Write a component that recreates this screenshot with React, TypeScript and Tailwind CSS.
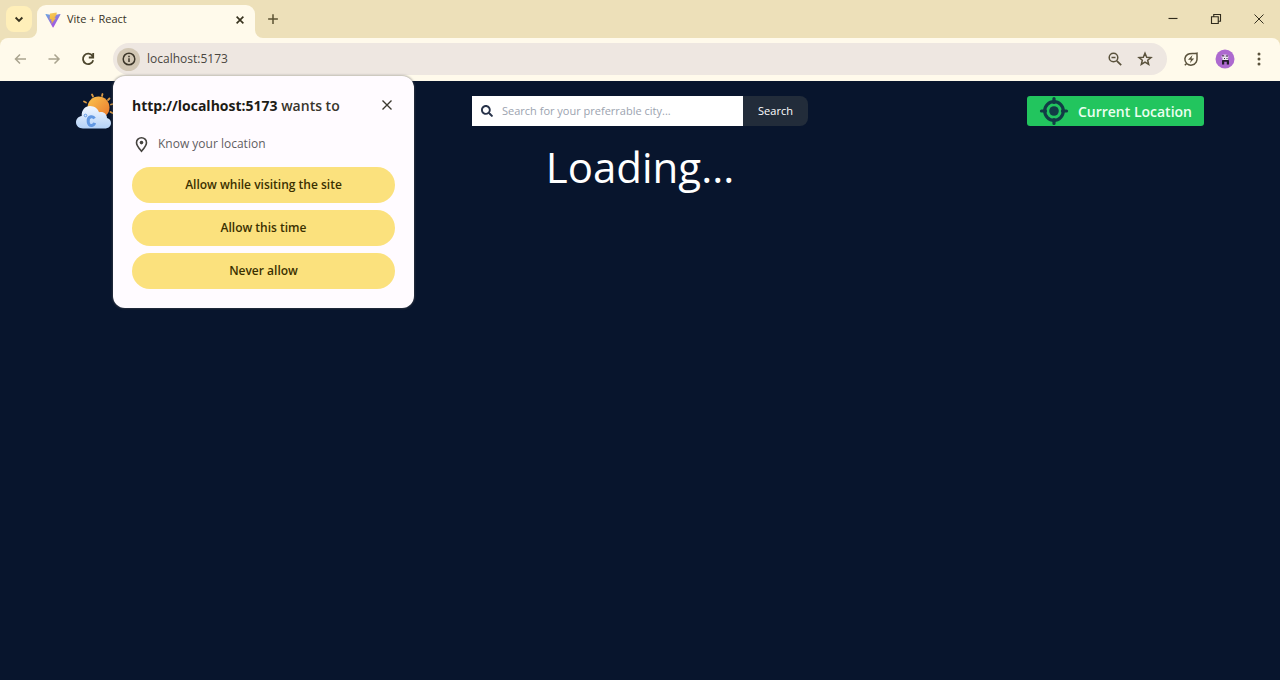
import type { ReactNode } from "react";
import { FaSearch } from "react-icons/fa";

type IconProps = { className?: string; children: ReactNode };

function Icon({ className = "", children }: IconProps) {
  return (
    <svg
      viewBox="0 0 16 16"
      className={className}
      fill="none"
      stroke="currentColor"
      strokeWidth="1.5"
      aria-hidden="true"
    >
      {children}
    </svg>
  );
}

function ViteLogo() {
  return (
    <svg viewBox="0 0 32 32" className="size-4 shrink-0" aria-hidden="true">
      <defs>
        <linearGradient id="vite-body" x1="0" y1="0" x2="0.6" y2="1">
          <stop offset="0" stopColor="#6aa9e0" />
          <stop offset="1" stopColor="#a94fe0" />
        </linearGradient>
        <linearGradient id="vite-bolt" x1="0.4" y1="0" x2="0.6" y2="1">
          <stop offset="0" stopColor="#f5c95a" />
          <stop offset="1" stopColor="#f0a838" />
        </linearGradient>
      </defs>
      <path d="M31 5.2 17 30.3c-.4.6-1.300.6-1.600 0L1 5.200c-.4-.7.200-1.500 1-1.300l14 2.500 14-2.500c.8-.2 1.400.6 1 1.300Z" fill="url(#vite-body)" />
      <path d="m23.500 1-13 2c-.3 0-.5.3-.5.600l-.7 10.700c0 .3.300.5.600.500l3-.6-.9 4.500 2-.6-1.500 6.500 9.500-13-3.200.6 4.200-6.500Z" fill="url(#vite-bolt)" />
    </svg>
  );
}

function WeatherLogo() {
  return (
    <svg viewBox="0 0 42 38" className="h-[38px] w-[42px]" role="img" aria-label="Weather">
      <defs>
        <linearGradient id="sun" x1="0" y1="0" x2="1" y2="1">
          <stop offset="0" stopColor="#fbc54e" />
          <stop offset="1" stopColor="#e9762c" />
        </linearGradient>
        <linearGradient id="cloud" x1="0" y1="0" x2="0" y2="1">
          <stop offset="0" stopColor="#f2f7ff" />
          <stop offset="1" stopColor="#b4d2f8" />
        </linearGradient>
      </defs>
      <g stroke="#d99a45" strokeWidth="1.800" strokeLinecap="round">
        <path d="M16 2.500 17 4.500M26.500 2 26 4M33.500 6.500 32 8M8 9.500 10 10.500M35 12.500 37 12M34.500 20 36.500 21" />
      </g>
      <circle cx="22.500" cy="15.500" r="11" fill="url(#sun)" />
      <path d="M7 36.500C3 36.500 0 34 0 30.300c0-3.500 2.500-6 5.700-6.400C5.500 18 9 14 14 14c4.500 0 8 2.800 9 6.200C27.500 19 31 22 31 26c2.500.6 4 2.400 4 5 0 3.300-2.700 5.500-6.300 5.500Z" fill="url(#cloud)" />
      <path d="M18.500 26.500c-.8-1.500-2-2.100-3.600-1.700-2.400.6-3 2.700-2.700 5.100.3 2.600 1.500 3.900 3.700 3.600 1.600-.2 2.300-1.100 2.700-2.600" fill="none" stroke="#6298e2" strokeWidth="3" />
      <circle cx="9.500" cy="23.500" r="1.300" fill="none" stroke="#6298e2" />
    </svg>
  );
}

function Avatar() {
  return (
    <svg viewBox="0 0 20 20" className="size-5" aria-hidden="true">
      <circle cx="10" cy="10" r="9.500" fill="#ad69cf" />
      <path d="M7 15.500V11.500C7 10 14 10 14 11.500v4h-2.200V12.800H9.200v2.700Z" fill="#241c2c" />
      <path d="M6.200 8.500C6 4.500 13.500 4 13.800 8.500Z" fill="#d5bfdf" />
      <path d="M7.500 8h5.500v3H7.500Z" fill="#efeaf2" />
      <path d="M7 6.800h2M11 7h2M9 9.500h1M11.500 9.500h1" stroke="#3b3044" />
    </svg>
  );
}

function TabStrip() {
  return (
    <div className="flex h-[38px] items-end bg-[#ede0b9] text-[#38331f]">
      <div className="flex h-full items-center pl-[6px]">
        <button type="button" aria-label="Search tabs" className="flex size-[26px] items-center justify-center rounded-lg bg-[#ffefb9]">
          <Icon className="size-3"><path d="m3.500 6 4.500 4.500L12.500 6" strokeWidth="2.500" /></Icon>
        </button>
      </div>
      <div className="flex h-full items-end">
        <svg viewBox="0 0 8 8" className="-ml-[3px] size-2" aria-hidden="true"><path d="M8 0v8H0a8 8 0 0 0 8-8Z" fill="#fffaeb" /></svg>
        <div className="flex h-[33px] w-[218px] items-center rounded-t-[9px] bg-[#fffaeb] pr-[7px] pb-1 pl-2">
          <ViteLogo />
          <span className="ml-[6px] grow text-[11px]">Vite + React</span>
          <button type="button" aria-label="Close tab" className="flex size-4 items-center justify-center">
            <Icon className="size-3"><path d="m3.500 3.500 9 9M12.500 3.500l-9 9" strokeWidth="2.200" /></Icon>
          </button>
        </div>
        <svg viewBox="0 0 8 8" className="size-2" aria-hidden="true"><path d="M0 0v8h8a8 8 0 0 1-8-8Z" fill="#fffaeb" /></svg>
      </div>
      <button type="button" aria-label="New tab" className="flex h-full w-5 items-center justify-center text-[#5b5232]">
        <Icon className="size-3"><path d="M8 1.500v13M1.500 8h13" strokeWidth="2" /></Icon>
      </button>
      <div className="ml-auto flex h-full items-center text-[#302b1c]">
        <button type="button" aria-label="Minimize" className="flex h-full w-[43px] items-center justify-center">
          <Icon className="size-3"><path d="M2 7.300h12" /></Icon>
        </button>
        <button type="button" aria-label="Restore" className="flex h-full w-[43px] items-center justify-center">
          <Icon className="size-3"><path d="M2 5h9v9H2ZM5 5V2h9v9h-3" /></Icon>
        </button>
        <button type="button" aria-label="Close window" className="flex h-full w-[43px] items-center justify-center">
          <Icon className="size-3"><path d="m2 2 12 12M14 2 2 14" strokeWidth="1.300" /></Icon>
        </button>
      </div>
    </div>
  );
}

function PermissionPrompt() {
  const choices = ["Allow while visiting the site", "Allow this time", "Never allow"];
  return (
    <div
      role="dialog"
      aria-labelledby="prompt-title"
      className="absolute top-[33px] left-0 z-10 w-[301px] rounded-xl bg-[#fffbff] px-[19px] pt-[18px] pb-[19px] shadow-[0_0_2px_1px_rgba(90,90,90,0.4)]"
    >
      <div className="flex items-start justify-between">
        <h2 id="prompt-title" className="text-[14px] leading-6 font-semibold text-[#38352c]">
          <b className="font-bold text-[#1d1b16]">http://localhost:5173</b> wants to
        </h2>
        <button type="button" aria-label="Dismiss" className="mt-[3px] flex size-4 items-center justify-center text-[#3b382f]">
          <Icon className="size-3"><path d="m2 2 12 12M14 2 2 14" strokeWidth="1.800" /></Icon>
        </button>
      </div>
      <p className="mt-4 flex items-center gap-2 pl-px text-[12px] leading-5 text-[#5f5e62]">
        <Icon className="size-[17px] text-[#45433f]">
          <path d="M8 14.300c3-3.500 4.700-5.300 4.700-8a4.700 4.700 0 0 0-9.400 0C3.300 9 5 10.800 8 14.300Z" />
          <circle cx="8" cy="6.200" r="1.700" fill="currentColor" stroke="none" />
        </Icon>
        Know your location
      </p>
      <div className="mt-[13px] flex flex-col gap-[7px]">
        {choices.map((choice) => (
          <button key={choice} type="button" className="h-9 rounded-full bg-[#fbe17d] text-[12px] font-semibold text-[#3a3000]">
            {choice}
          </button>
        ))}
      </div>
    </div>
  );
}

function Toolbar() {
  return (
    <div className="bg-[#ede0b9]">
      <div className="flex h-[43px] items-center rounded-t-lg bg-[#fffaeb] pr-[13px] pb-px text-[#5a523c]">
        <div className="flex items-center gap-[18px] pl-3">
          <button type="button" aria-label="Back" className="text-[#aaa48f]">
            <Icon className="size-4"><path d="M14 8H3.500M8 3.500 3.500 8 8 12.500" /></Icon>
          </button>
          <button type="button" aria-label="Forward" className="text-[#aaa48f]">
            <Icon className="size-4"><path d="M2.500 8H13M8.500 3.500 13 8l-4.500 4.500" /></Icon>
          </button>
          <button type="button" aria-label="Reload" className="text-[#4d462d]">
            <Icon className="size-4"><path d="M12.500 5A5.200 5.200 0 1 0 13.200 9.300M13.200 2v4.500H8.800" strokeWidth="1.800" /></Icon>
          </button>
        </div>
        <div className="relative ml-[17px] flex h-8 grow items-center rounded-full bg-[#eee7e1] pr-[14px] pl-1">
          <button type="button" aria-label="Site information" className="flex size-[23px] items-center justify-center rounded-full bg-[#d2c7b4] text-[#3c3629]">
            <Icon className="size-4">
              <circle cx="8" cy="8" r="5.800" />
              <path d="M8 7.200V11M8 4.700V6.200" />
            </Icon>
          </button>
          <input
            aria-label="Address"
            defaultValue="localhost:5173"
            className="ml-[7px] min-w-0 grow bg-transparent text-[12px] text-[#49463f] outline-none"
          />
          <div className="flex items-center gap-[14px]">
            <button type="button" aria-label="Zoom">
              <Icon className="size-4">
                <circle cx="6.500" cy="6.500" r="4.300" />
                <path d="m9.800 9.800 4.400 4.400M4.500 6.500h4" strokeWidth="1.700" />
              </Icon>
            </button>
            <button type="button" aria-label="Bookmark">
              <Icon className="size-4">
                <path d="m8 2.200 1.700 4 4.300.3-3.300 2.800 1 4.200L8 11.200l-3.700 2.300 1-4.200L2 6.500l4.300-.3Z" />
              </Icon>
            </button>
          </div>
          <PermissionPrompt />
        </div>
        <div className="flex items-center gap-4 pl-4">
          <button type="button" aria-label="Energy saver">
            <Icon className="size-4">
              <path d="M3.700 12.500C.8 9.500 1.500 5.300 4.500 3.500 7 2 10 3 14 2.200c-.2 3.800.8 6.300-.8 9-1.800 3.200-6.500 4-9.500 1.300ZM4.200 12 1.800 14.200" />
              <path d="M9.500 4 5 8.800h3L6.800 12.200l4.400-4.700H8.400Z" fill="currentColor" stroke="none" />
            </Icon>
          </button>
          <button type="button" aria-label="Profile"><Avatar /></button>
          <button type="button" aria-label="Browser menu">
            <Icon className="size-4">
              <g fill="currentColor" stroke="none">
                <circle cx="8" cy="3" r="1.500" />
                <circle cx="8" cy="8" r="1.500" />
                <circle cx="8" cy="13" r="1.500" />
              </g>
            </Icon>
          </button>
        </div>
      </div>
    </div>
  );
}

function WeatherPage() {
  return (
    <main className="grow bg-[#08152d] px-[76px] pt-[11px] text-white">
      <header className="grid grid-cols-[1fr_auto_1fr] items-center">
        <WeatherLogo />
        <form className="flex h-[30px]" onSubmit={(event) => event.preventDefault()}>
          <label className="flex w-[271px] items-center gap-[9px] bg-white pl-[9px] text-[#28334a]">
            <FaSearch className="size-3 shrink-0" aria-hidden="true" />
            <input
              type="text"
              aria-label="City"
              placeholder="Search for your preferrable city..."
              className="min-w-0 grow bg-transparent text-[11px] outline-none placeholder:text-[#9ca3af]"
            />
          </label>
          <button type="submit" className="w-[65px] rounded-r-lg bg-[#222c3a] text-[11px]">Search</button>
        </form>
        <button type="button" className="flex h-[30px] items-center gap-[9px] justify-self-end rounded-[3px] bg-[#22c55e] px-3 text-[14px] font-semibold text-[#eafff0]">
          <svg viewBox="0 0 30 30" className="size-[30px]" fill="none" stroke="#123c46" aria-hidden="true">
            <circle cx="15" cy="15" r="9.300" strokeWidth="3.200" />
            <path d="M15 2.500v4M15 23.500v4M2.500 15h4M23.500 15h4" strokeWidth="3.200" strokeLinecap="round" />
            <circle cx="15" cy="15" r="4.800" fill="#123c46" stroke="none" />
          </svg>
          Current Location
        </button>
      </header>
      <h1 className="mt-1 text-center text-[42px] leading-[66px]">Loading...</h1>
    </main>
  );
}

export default function App() {
  return (
    <div className="flex min-h-screen flex-col font-['Open_Sans','Noto_Sans',sans-serif]">
      <TabStrip />
      <Toolbar />
      <WeatherPage />
    </div>
  );
}
